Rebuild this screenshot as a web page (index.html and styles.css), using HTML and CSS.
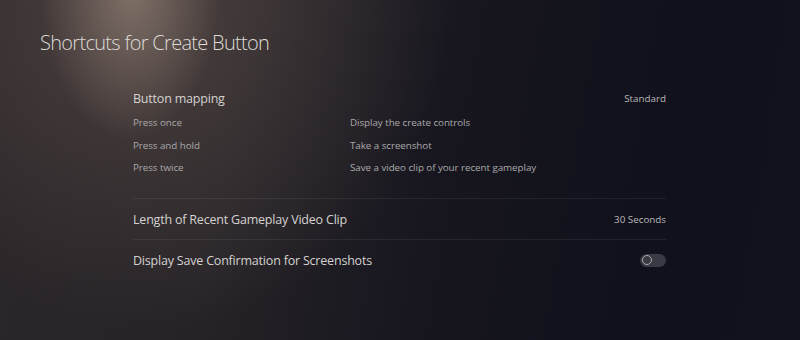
FILE: index.html
```html
<!DOCTYPE html>
<html lang="en">
<head>
    <meta charset="UTF-8">
    <meta name="viewport" content="width=device-width, initial-scale=1.0">
    <title>Shortcuts for Create Button</title>
    <link rel="stylesheet" href="styles.css">
</head>
<body>
    <div class="screen">
        <h1 class="page-title">Shortcuts for Create Button</h1>

        <div class="settings">
            <div class="setting setting-group">
                <div class="setting-row">
                    <span class="setting-label">Button mapping</span>
                    <span class="setting-value">Standard</span>
                </div>
                <div class="mapping">
                    <span>Press once</span>
                    <span>Display the create controls</span>
                    <span>Press and hold</span>
                    <span>Take a screenshot</span>
                    <span>Press twice</span>
                    <span>Save a video clip of your recent gameplay</span>
                </div>
            </div>

            <div class="setting">
                <div class="setting-row">
                    <span class="setting-label">Length of Recent Gameplay Video Clip</span>
                    <span class="setting-value">30 Seconds</span>
                </div>
            </div>

            <div class="setting">
                <div class="setting-row">
                    <span class="setting-label">Display Save Confirmation for Screenshots</span>
                    <span class="toggle"><span class="toggle-knob"></span></span>
                </div>
            </div>
        </div>
    </div>
</body>
</html>
```

FILE: styles.css
```css
html, body {
    margin: 0;
    height: 100%;
}
body {
    font-family: "Open Sans", "Noto Sans", sans-serif;
    color: #d6d3d1;
    background-color: #11121b;
    overflow: hidden;
}
.screen {
    height: 100%;
    box-sizing: border-box;
    padding: 31px 0 0 40px;
    background:
        radial-gradient(ellipse 90px 150px at 130px -10px, rgba(170, 150, 135, 0.55), rgba(170, 150, 135, 0) 100%),
        radial-gradient(ellipse 300px 330px at 150px 0px, rgba(120, 100, 92, 0.45), rgba(120, 100, 92, 0) 100%),
        linear-gradient(100deg, #2b2629 0%, #262327 30%, #17161f 55%, #10111b 80%, #11121c 100%);
}
.page-title {
    margin: 0;
    font-size: 20px;
    font-weight: 300;
    line-height: 24px;
    color: #dedad6;
    letter-spacing: -0.7px;
}
.settings {
    width: 533px;
    margin: 33px 0 0 93px;
}
.setting {
    border-top: 1px solid rgba(255, 255, 255, 0.07);
    padding: 11px 0 9px;
}
.setting-group {
    border-top: none;
    padding: 0 0 21px;
}
.setting-row {
    display: flex;
    justify-content: space-between;
    align-items: center;
    height: 20px;
}
.setting-label {
    font-size: 12.5px;
    font-weight: 400;
    color: #d4d2d0;
    letter-spacing: -0.2px;
}
.setting-value {
    font-size: 9.8px;
    color: #b9b8bb;
}
.mapping {
    display: grid;
    grid-template-columns: 217px 1fr;
    row-gap: 6px;
    margin-top: 7px;
    font-size: 9.8px;
    line-height: 16.5px;
    color: #aaa9aa;
    letter-spacing: -0.05px;
}
.toggle {
    position: relative;
    width: 26px;
    height: 13px;
    border-radius: 7px;
    background-color: #3a3a44;
}
.toggle-knob {
    position: absolute;
    left: 2px;
    top: 1px;
    width: 8px;
    height: 8px;
    border: 1.5px solid #a9a9b0;
    border-radius: 50%;
}
```
